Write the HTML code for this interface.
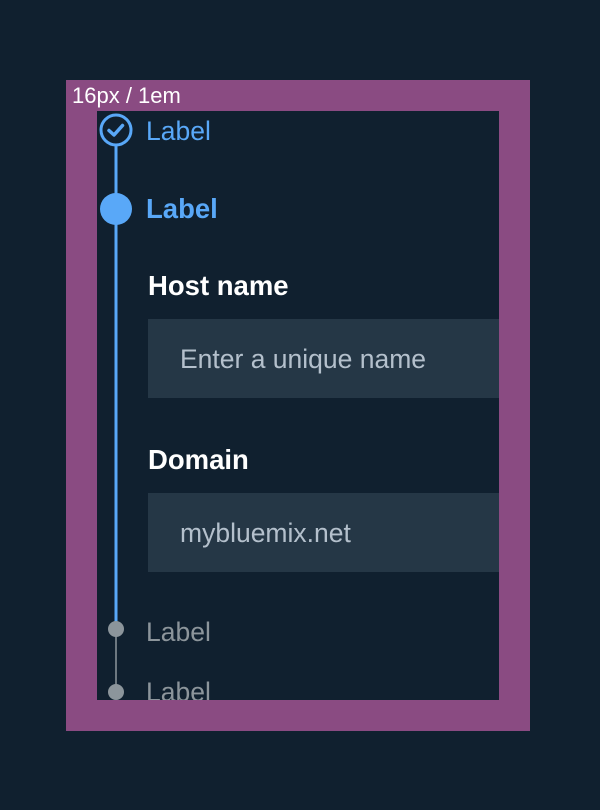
<!DOCTYPE html>
<html><head><style>
body{margin:0;width:600px;height:810px;background:#10202f;position:relative;overflow:hidden;font-family:"Liberation Sans",Arial,sans-serif}
.frame{position:absolute;left:66px;top:80px;width:464px;height:651px;background:#8a4b82}
.inner{position:absolute;left:97px;top:111px;width:402px;height:589px;background:#10202f;overflow:hidden}
.tag{position:absolute;left:72px;top:84px;color:#fff;font-size:22px;line-height:24px}
.t{position:absolute;left:49px;font-size:26.5px;line-height:30px;white-space:nowrap}
.b{font-weight:bold;font-size:27.5px}
.inp{position:absolute;left:51px;width:351px;height:79px;background:#253746;color:#b4c0cc;font-size:26.5px;line-height:81px;padding-left:32px;box-sizing:border-box}
</style></head><body>
<div class="frame"></div>
<div class="tag">16px / 1em</div>
<div class="inner">
<svg style="position:absolute;left:0;top:0" width="60" height="589">
<line x1="19" y1="34" x2="19" y2="518" stroke="#59a8f8" stroke-width="3"/>
<line x1="19" y1="518" x2="19" y2="581" stroke="#8c959b" stroke-width="1.5"/>
<circle cx="19" cy="19" r="15" fill="#10202f" stroke="#59a8f8" stroke-width="3"/>
<path d="M12 19.5 L17 24 L25.5 14.5" fill="none" stroke="#59a8f8" stroke-width="3.5" stroke-linecap="round" stroke-linejoin="round"/>
<circle cx="19" cy="98" r="16" fill="#59a8f8"/>
<circle cx="19" cy="518" r="8" fill="#8c959b"/>
<circle cx="19" cy="581" r="8" fill="#8c959b"/>
</svg>
<div class="t" style="top:5px;color:#59a8f8">Label</div>
<div class="t b" style="top:83px;color:#59a8f8">Label</div>
<div class="t b" style="top:160px;left:51px;color:#fff">Host name</div>
<div class="inp" style="top:208px">Enter a unique name</div>
<div class="t b" style="top:334px;left:51px;color:#fff">Domain</div>
<div class="inp" style="top:382px">mybluemix.net</div>
<div class="t" style="top:506px;color:#8c959b">Label</div>
<div class="t" style="top:566px;color:#8c959b">Label</div>
</div>
</body></html>
